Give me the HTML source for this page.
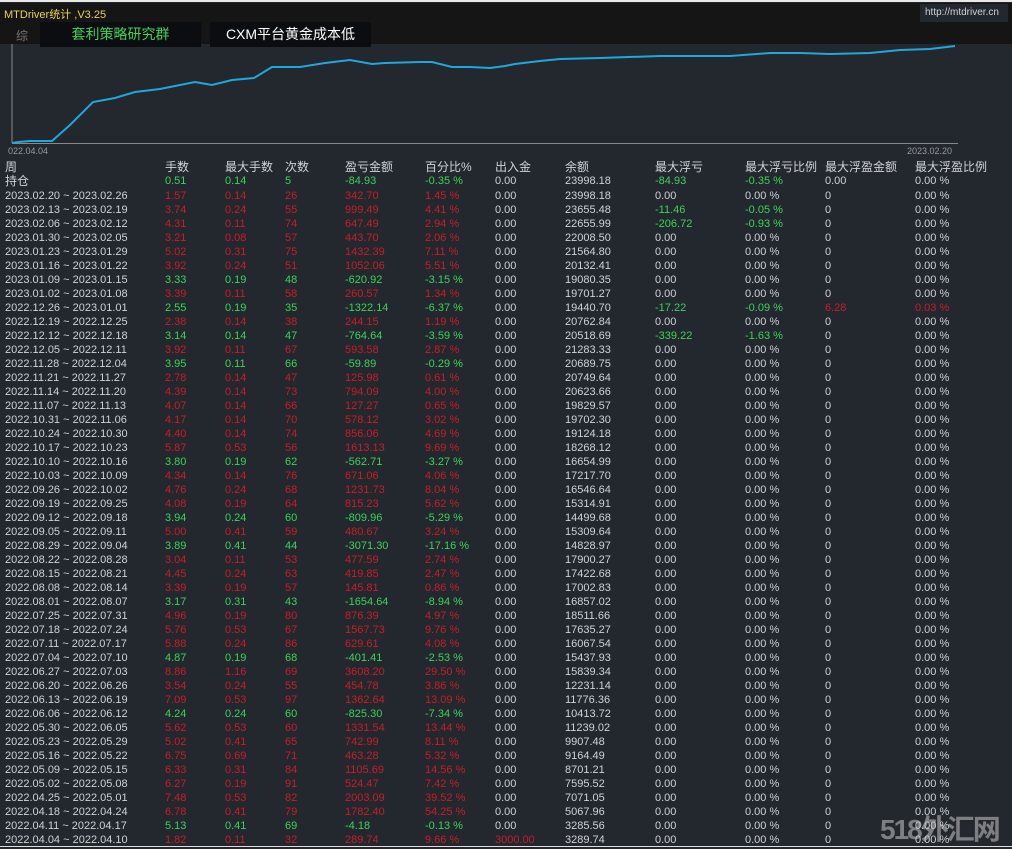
<!DOCTYPE html><html><head><meta charset="utf-8"><style>
*{margin:0;padding:0}
body{width:1012px;height:849px;background:#23272e;position:relative;overflow:hidden;font-family:"Liberation Sans","Noto Sans CJK SC",sans-serif;color:#cfd3d8}
#top{position:absolute;left:0;top:3px;width:1012px;height:41px;background:#151515}
#tl{position:absolute;left:0;top:0;width:1012px;height:2px;background:#e8e8e8}
.t{position:absolute;white-space:nowrap}
.tab{position:absolute;top:22px;height:25px;width:161px;background:#0b0d10;font-size:14px;line-height:25px;text-align:center}
.r{position:absolute;left:0;height:14px;font-size:11px;line-height:14px;white-space:nowrap;width:1012px}
.r span{position:absolute;top:0}
.r span:nth-child(1){left:5px}.r span:nth-child(2){left:165px}.r span:nth-child(3){left:225px}.r span:nth-child(4){left:285px}.r span:nth-child(5){left:345px}.r span:nth-child(6){left:425px}.r span:nth-child(7){left:495px}.r span:nth-child(8){left:565px}.r span:nth-child(9){left:655px}.r span:nth-child(10){left:745px}.r span:nth-child(11){left:825px}.r span:nth-child(12){left:915px}
.R span:nth-child(n+2):nth-child(-n+6){color:#c81e28}
.G span:nth-child(n+2):nth-child(-n+6){color:#3dd35a}
.g{color:#3dd35a!important}.d{color:#c81e28!important}
.h{font-size:12px}
</style></head><body>
<div id="top"></div><div id="tl"></div>
<div class="t" style="left:4px;top:6px;font-size:11px;color:#e6d25a">MTDriver统计 ,V3.25</div>
<div class="t" style="left:920px;top:4px;width:88px;height:18px;background:#23272e"></div>
<div class="t" style="left:925px;top:7px;font-size:10px;color:#cfd3d8">http://mtdriver.cn</div>
<div class="t" style="left:16px;top:27px;font-size:12px;color:#777">综</div>
<div class="tab" style="left:40px;color:#3dd35a">套利策略研究群</div>
<div class="tab" style="left:210px;color:#fff">CXM平台黄金成本低</div>
<svg class="t" style="left:0;top:44px" width="1012" height="112">
<line x1="12" y1="0" x2="12" y2="99" stroke="#888"/><line x1="12" y1="99.5" x2="958" y2="99.5" stroke="#888"/>
<polyline fill="none" stroke="#1fa8dc" stroke-width="2" points="12,99 18,98 30,97 52,97 70,81 93,58 115,54 135,48 160,45 195,38 212,41 232,36 254,34 272,23 283,23 300,23 325,19 350,16 372,20 385,19 420,18 432,18 452,23 470,23 490,24 505,22 515,20 540,17 560,15 600,14 660,12 700,12 730,12 770,9 800,9 830,10 870,9 900,6 930,5 955,2"/></svg>
<div class="t" style="left:8px;top:146px;font-size:9px;color:#999">022.04.04</div>
<div class="t" style="left:907px;top:146px;font-size:9px;color:#999">2023.02.20</div>
<div class="r h" style="top:160px"><span>周</span><span>手数</span><span>最大手数</span><span>次数</span><span>盈亏金额</span><span>百分比%</span><span>出入金</span><span>余额</span><span>最大浮亏</span><span>最大浮亏比例</span><span>最大浮盈金额</span><span>最大浮盈比例</span></div>
<div class="r G h" style="top:174px;font-size:12px"><span>持仓</span><span style="font-size:11px">0.51</span><span style="font-size:11px">0.14</span><span style="font-size:11px">5</span><span style="font-size:11px">-84.93</span><span style="font-size:11px">-0.35 %</span><span style="font-size:11px">0.00</span><span style="font-size:11px">23998.18</span><span class="g" style="font-size:11px">-84.93</span><span class="g" style="font-size:11px">-0.35 %</span><span style="font-size:11px">0.00</span><span style="font-size:11px">0.00 %</span></div>
<div class="r R" style="top:189px"><span>2023.02.20 ~ 2023.02.26</span><span>1.57</span><span>0.14</span><span>26</span><span>342.70</span><span>1.45 %</span><span>0.00</span><span>23998.18</span><span>0.00</span><span>0.00 %</span><span>0</span><span>0.00 %</span></div>
<div class="r R" style="top:203px"><span>2023.02.13 ~ 2023.02.19</span><span>3.74</span><span>0.24</span><span>55</span><span>999.49</span><span>4.41 %</span><span>0.00</span><span>23655.48</span><span class="g">-11.46</span><span class="g">-0.05 %</span><span>0</span><span>0.00 %</span></div>
<div class="r R" style="top:217px"><span>2023.02.06 ~ 2023.02.12</span><span>4.31</span><span>0.11</span><span>74</span><span>647.49</span><span>2.94 %</span><span>0.00</span><span>22655.99</span><span class="g">-206.72</span><span class="g">-0.93 %</span><span>0</span><span>0.00 %</span></div>
<div class="r R" style="top:231px"><span>2023.01.30 ~ 2023.02.05</span><span>3.21</span><span>0.08</span><span>57</span><span>443.70</span><span>2.06 %</span><span>0.00</span><span>22008.50</span><span>0.00</span><span>0.00 %</span><span>0</span><span>0.00 %</span></div>
<div class="r R" style="top:245px"><span>2023.01.23 ~ 2023.01.29</span><span>5.02</span><span>0.31</span><span>75</span><span>1432.39</span><span>7.11 %</span><span>0.00</span><span>21564.80</span><span>0.00</span><span>0.00 %</span><span>0</span><span>0.00 %</span></div>
<div class="r R" style="top:259px"><span>2023.01.16 ~ 2023.01.22</span><span>3.92</span><span>0.24</span><span>51</span><span>1052.06</span><span>5.51 %</span><span>0.00</span><span>20132.41</span><span>0.00</span><span>0.00 %</span><span>0</span><span>0.00 %</span></div>
<div class="r G" style="top:273px"><span>2023.01.09 ~ 2023.01.15</span><span>3.33</span><span>0.19</span><span>48</span><span>-620.92</span><span>-3.15 %</span><span>0.00</span><span>19080.35</span><span>0.00</span><span>0.00 %</span><span>0</span><span>0.00 %</span></div>
<div class="r R" style="top:287px"><span>2023.01.02 ~ 2023.01.08</span><span>3.39</span><span>0.11</span><span>58</span><span>260.57</span><span>1.34 %</span><span>0.00</span><span>19701.27</span><span>0.00</span><span>0.00 %</span><span>0</span><span>0.00 %</span></div>
<div class="r G" style="top:301px"><span>2022.12.26 ~ 2023.01.01</span><span>2.55</span><span>0.19</span><span>35</span><span>-1322.14</span><span>-6.37 %</span><span>0.00</span><span>19440.70</span><span class="g">-17.22</span><span class="g">-0.09 %</span><span class="d">6.28</span><span class="d">0.03 %</span></div>
<div class="r R" style="top:315px"><span>2022.12.19 ~ 2022.12.25</span><span>2.38</span><span>0.14</span><span>38</span><span>244.15</span><span>1.19 %</span><span>0.00</span><span>20762.84</span><span>0.00</span><span>0.00 %</span><span>0</span><span>0.00 %</span></div>
<div class="r G" style="top:329px"><span>2022.12.12 ~ 2022.12.18</span><span>3.14</span><span>0.14</span><span>47</span><span>-764.64</span><span>-3.59 %</span><span>0.00</span><span>20518.69</span><span class="g">-339.22</span><span class="g">-1.63 %</span><span>0</span><span>0.00 %</span></div>
<div class="r R" style="top:343px"><span>2022.12.05 ~ 2022.12.11</span><span>3.92</span><span>0.11</span><span>67</span><span>593.58</span><span>2.87 %</span><span>0.00</span><span>21283.33</span><span>0.00</span><span>0.00 %</span><span>0</span><span>0.00 %</span></div>
<div class="r G" style="top:357px"><span>2022.11.28 ~ 2022.12.04</span><span>3.95</span><span>0.11</span><span>66</span><span>-59.89</span><span>-0.29 %</span><span>0.00</span><span>20689.75</span><span>0.00</span><span>0.00 %</span><span>0</span><span>0.00 %</span></div>
<div class="r R" style="top:371px"><span>2022.11.21 ~ 2022.11.27</span><span>2.78</span><span>0.14</span><span>47</span><span>125.98</span><span>0.61 %</span><span>0.00</span><span>20749.64</span><span>0.00</span><span>0.00 %</span><span>0</span><span>0.00 %</span></div>
<div class="r R" style="top:385px"><span>2022.11.14 ~ 2022.11.20</span><span>4.39</span><span>0.14</span><span>73</span><span>794.09</span><span>4.00 %</span><span>0.00</span><span>20623.66</span><span>0.00</span><span>0.00 %</span><span>0</span><span>0.00 %</span></div>
<div class="r R" style="top:399px"><span>2022.11.07 ~ 2022.11.13</span><span>4.07</span><span>0.14</span><span>66</span><span>127.27</span><span>0.65 %</span><span>0.00</span><span>19829.57</span><span>0.00</span><span>0.00 %</span><span>0</span><span>0.00 %</span></div>
<div class="r R" style="top:413px"><span>2022.10.31 ~ 2022.11.06</span><span>4.17</span><span>0.14</span><span>70</span><span>578.12</span><span>3.02 %</span><span>0.00</span><span>19702.30</span><span>0.00</span><span>0.00 %</span><span>0</span><span>0.00 %</span></div>
<div class="r R" style="top:427px"><span>2022.10.24 ~ 2022.10.30</span><span>4.40</span><span>0.14</span><span>74</span><span>856.06</span><span>4.69 %</span><span>0.00</span><span>19124.18</span><span>0.00</span><span>0.00 %</span><span>0</span><span>0.00 %</span></div>
<div class="r R" style="top:441px"><span>2022.10.17 ~ 2022.10.23</span><span>5.87</span><span>0.53</span><span>56</span><span>1613.13</span><span>9.69 %</span><span>0.00</span><span>18268.12</span><span>0.00</span><span>0.00 %</span><span>0</span><span>0.00 %</span></div>
<div class="r G" style="top:455px"><span>2022.10.10 ~ 2022.10.16</span><span>3.80</span><span>0.19</span><span>62</span><span>-562.71</span><span>-3.27 %</span><span>0.00</span><span>16654.99</span><span>0.00</span><span>0.00 %</span><span>0</span><span>0.00 %</span></div>
<div class="r R" style="top:469px"><span>2022.10.03 ~ 2022.10.09</span><span>4.34</span><span>0.14</span><span>76</span><span>671.06</span><span>4.06 %</span><span>0.00</span><span>17217.70</span><span>0.00</span><span>0.00 %</span><span>0</span><span>0.00 %</span></div>
<div class="r R" style="top:483px"><span>2022.09.26 ~ 2022.10.02</span><span>4.76</span><span>0.24</span><span>68</span><span>1231.73</span><span>8.04 %</span><span>0.00</span><span>16546.64</span><span>0.00</span><span>0.00 %</span><span>0</span><span>0.00 %</span></div>
<div class="r R" style="top:497px"><span>2022.09.19 ~ 2022.09.25</span><span>4.08</span><span>0.19</span><span>64</span><span>815.23</span><span>5.62 %</span><span>0.00</span><span>15314.91</span><span>0.00</span><span>0.00 %</span><span>0</span><span>0.00 %</span></div>
<div class="r G" style="top:511px"><span>2022.09.12 ~ 2022.09.18</span><span>3.94</span><span>0.24</span><span>60</span><span>-809.96</span><span>-5.29 %</span><span>0.00</span><span>14499.68</span><span>0.00</span><span>0.00 %</span><span>0</span><span>0.00 %</span></div>
<div class="r R" style="top:525px"><span>2022.09.05 ~ 2022.09.11</span><span>5.00</span><span>0.41</span><span>59</span><span>480.67</span><span>3.24 %</span><span>0.00</span><span>15309.64</span><span>0.00</span><span>0.00 %</span><span>0</span><span>0.00 %</span></div>
<div class="r G" style="top:539px"><span>2022.08.29 ~ 2022.09.04</span><span>3.89</span><span>0.41</span><span>44</span><span>-3071.30</span><span>-17.16 %</span><span>0.00</span><span>14828.97</span><span>0.00</span><span>0.00 %</span><span>0</span><span>0.00 %</span></div>
<div class="r R" style="top:553px"><span>2022.08.22 ~ 2022.08.28</span><span>3.04</span><span>0.11</span><span>53</span><span>477.59</span><span>2.74 %</span><span>0.00</span><span>17900.27</span><span>0.00</span><span>0.00 %</span><span>0</span><span>0.00 %</span></div>
<div class="r R" style="top:567px"><span>2022.08.15 ~ 2022.08.21</span><span>4.45</span><span>0.24</span><span>63</span><span>419.85</span><span>2.47 %</span><span>0.00</span><span>17422.68</span><span>0.00</span><span>0.00 %</span><span>0</span><span>0.00 %</span></div>
<div class="r R" style="top:581px"><span>2022.08.08 ~ 2022.08.14</span><span>3.39</span><span>0.19</span><span>57</span><span>145.81</span><span>0.86 %</span><span>0.00</span><span>17002.83</span><span>0.00</span><span>0.00 %</span><span>0</span><span>0.00 %</span></div>
<div class="r G" style="top:595px"><span>2022.08.01 ~ 2022.08.07</span><span>3.17</span><span>0.31</span><span>43</span><span>-1654.64</span><span>-8.94 %</span><span>0.00</span><span>16857.02</span><span>0.00</span><span>0.00 %</span><span>0</span><span>0.00 %</span></div>
<div class="r R" style="top:609px"><span>2022.07.25 ~ 2022.07.31</span><span>4.96</span><span>0.19</span><span>80</span><span>876.39</span><span>4.97 %</span><span>0.00</span><span>18511.66</span><span>0.00</span><span>0.00 %</span><span>0</span><span>0.00 %</span></div>
<div class="r R" style="top:623px"><span>2022.07.18 ~ 2022.07.24</span><span>5.76</span><span>0.53</span><span>67</span><span>1567.73</span><span>9.76 %</span><span>0.00</span><span>17635.27</span><span>0.00</span><span>0.00 %</span><span>0</span><span>0.00 %</span></div>
<div class="r R" style="top:637px"><span>2022.07.11 ~ 2022.07.17</span><span>5.88</span><span>0.24</span><span>86</span><span>629.61</span><span>4.08 %</span><span>0.00</span><span>16067.54</span><span>0.00</span><span>0.00 %</span><span>0</span><span>0.00 %</span></div>
<div class="r G" style="top:651px"><span>2022.07.04 ~ 2022.07.10</span><span>4.87</span><span>0.19</span><span>68</span><span>-401.41</span><span>-2.53 %</span><span>0.00</span><span>15437.93</span><span>0.00</span><span>0.00 %</span><span>0</span><span>0.00 %</span></div>
<div class="r R" style="top:665px"><span>2022.06.27 ~ 2022.07.03</span><span>8.86</span><span>1.16</span><span>69</span><span>3608.20</span><span>29.50 %</span><span>0.00</span><span>15839.34</span><span>0.00</span><span>0.00 %</span><span>0</span><span>0.00 %</span></div>
<div class="r R" style="top:679px"><span>2022.06.20 ~ 2022.06.26</span><span>3.54</span><span>0.24</span><span>55</span><span>454.78</span><span>3.86 %</span><span>0.00</span><span>12231.14</span><span>0.00</span><span>0.00 %</span><span>0</span><span>0.00 %</span></div>
<div class="r R" style="top:693px"><span>2022.06.13 ~ 2022.06.19</span><span>7.09</span><span>0.53</span><span>97</span><span>1362.64</span><span>13.09 %</span><span>0.00</span><span>11776.36</span><span>0.00</span><span>0.00 %</span><span>0</span><span>0.00 %</span></div>
<div class="r G" style="top:707px"><span>2022.06.06 ~ 2022.06.12</span><span>4.24</span><span>0.24</span><span>60</span><span>-825.30</span><span>-7.34 %</span><span>0.00</span><span>10413.72</span><span>0.00</span><span>0.00 %</span><span>0</span><span>0.00 %</span></div>
<div class="r R" style="top:721px"><span>2022.05.30 ~ 2022.06.05</span><span>5.62</span><span>0.53</span><span>60</span><span>1331.54</span><span>13.44 %</span><span>0.00</span><span>11239.02</span><span>0.00</span><span>0.00 %</span><span>0</span><span>0.00 %</span></div>
<div class="r R" style="top:735px"><span>2022.05.23 ~ 2022.05.29</span><span>5.02</span><span>0.41</span><span>65</span><span>742.99</span><span>8.11 %</span><span>0.00</span><span>9907.48</span><span>0.00</span><span>0.00 %</span><span>0</span><span>0.00 %</span></div>
<div class="r R" style="top:749px"><span>2022.05.16 ~ 2022.05.22</span><span>6.75</span><span>0.69</span><span>71</span><span>463.28</span><span>5.32 %</span><span>0.00</span><span>9164.49</span><span>0.00</span><span>0.00 %</span><span>0</span><span>0.00 %</span></div>
<div class="r R" style="top:763px"><span>2022.05.09 ~ 2022.05.15</span><span>6.33</span><span>0.31</span><span>84</span><span>1105.69</span><span>14.56 %</span><span>0.00</span><span>8701.21</span><span>0.00</span><span>0.00 %</span><span>0</span><span>0.00 %</span></div>
<div class="r R" style="top:777px"><span>2022.05.02 ~ 2022.05.08</span><span>6.27</span><span>0.19</span><span>91</span><span>524.47</span><span>7.42 %</span><span>0.00</span><span>7595.52</span><span>0.00</span><span>0.00 %</span><span>0</span><span>0.00 %</span></div>
<div class="r R" style="top:791px"><span>2022.04.25 ~ 2022.05.01</span><span>7.48</span><span>0.53</span><span>82</span><span>2003.09</span><span>39.52 %</span><span>0.00</span><span>7071.05</span><span>0.00</span><span>0.00 %</span><span>0</span><span>0.00 %</span></div>
<div class="r R" style="top:805px"><span>2022.04.18 ~ 2022.04.24</span><span>6.78</span><span>0.41</span><span>79</span><span>1782.40</span><span>54.25 %</span><span>0.00</span><span>5067.96</span><span>0.00</span><span>0.00 %</span><span>0</span><span>0.00 %</span></div>
<div class="r G" style="top:819px"><span>2022.04.11 ~ 2022.04.17</span><span>5.13</span><span>0.41</span><span>69</span><span>-4.18</span><span>-0.13 %</span><span>0.00</span><span>3285.56</span><span>0.00</span><span>0.00 %</span><span>0</span><span>0.00 %</span></div>
<div class="r R" style="top:833px"><span>2022.04.04 ~ 2022.04.10</span><span>1.82</span><span>0.11</span><span>32</span><span>289.74</span><span>9.66 %</span><span class="d">3000.00</span><span>3289.74</span><span>0.00</span><span>0.00 %</span><span>0</span><span>0.00 %</span></div>
<div class="t" style="left:0;top:846px;width:1012px;height:1px;background:#ddd"></div>
<div class="t" style="left:880px;top:808px;font-size:28px;font-weight:bold;color:rgba(200,200,200,0.55);letter-spacing:-2px">518外汇网</div>
</body></html>
